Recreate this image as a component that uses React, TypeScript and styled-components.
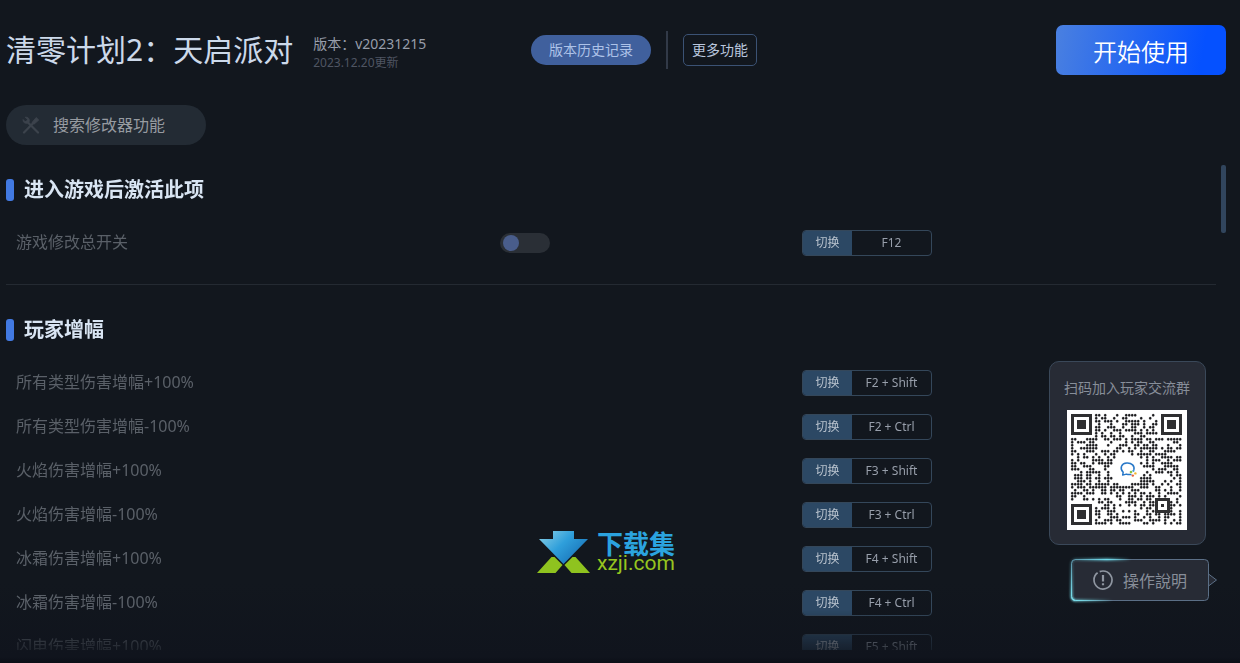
import React, { useId, useState } from "react";
import styled, { createGlobalStyle } from "styled-components";

const GlobalStyle = createGlobalStyle`
  *, *::before, *::after { box-sizing: border-box; }
  body {
    margin: 0;
    background: #12171e;
    color: #d3dcea;
    font-family: "Noto Sans", "Noto Sans CJK SC", sans-serif;
    font-weight: 400;
  }
  button, input { font: inherit; }
  h1, h2, p { margin: 0; }
`;

const Page = styled.div`
  position: relative;
  display: flex;
  flex-direction: column;
  height: 100vh;
  min-height: 600px;
  padding: 25px 14px 13px 6px;
  overflow: hidden;
  background: linear-gradient(to bottom, #12171e calc(100% - 80px), #10141d calc(100% - 6px), #0b0e16 100%);
`;

const Header = styled.header`
  display: flex;
  align-items: center;
  height: 50px;
`;

const TitleGroup = styled.div`
  display: flex;
  align-items: center;
  gap: 20px;
  flex: 0 1 525px;
  white-space: nowrap;
`;

const Title = styled.h1`
  font-size: 30px;
  line-height: 50px;
  font-weight: 400;
  color: #ccd9ea;
`;

const VersionInfo = styled.div`
  display: flex;
  flex-direction: column;
  padding-top: 6px;
`;

const VersionText = styled.p`
  font-size: 14px;
  line-height: 20px;
  color: #979daa;
`;

const UpdatedText = styled.p`
  font-size: 12px;
  line-height: 18px;
  color: #4f5562;
`;

const HistoryButton = styled.button`
  width: 120px;
  height: 30px;
  padding: 0 0 2px;
  border: 0;
  border-radius: 15px;
  background: #40609d;
  color: #adc2e8;
  font-size: 14px;
`;

const HeaderRule = styled.span`
  width: 2px;
  height: 38px;
  margin: 0 15px;
  background: #323a48;
`;

const MoreButton = styled.button`
  width: 74px;
  height: 32px;
  padding: 0 0 2px;
  border: 1px solid #3b5274;
  border-radius: 5px;
  background: transparent;
  color: #bac7de;
  font-size: 14px;
`;

const StartButton = styled.button`
  width: 170px;
  height: 50px;
  margin-left: auto;
  padding: 0;
  border: 0;
  border-radius: 7px;
  background: linear-gradient(100deg, #4a80e0 0%, #0551ff 85%);
  color: #fff;
  font-size: 24px;
  font-weight: 350;
`;

const SearchBox = styled.label`
  display: flex;
  align-items: center;
  flex: none;
  gap: 13px;
  width: 200px;
  height: 40px;
  margin: 30px 0 20px;
  padding: 0 16px;
  border-radius: 20px;
  background: #232b34;
`;

const SearchInput = styled.input`
  flex: 1;
  min-width: 0;
  padding: 0;
  border: 0;
  outline: 0;
  background: transparent;
  color: #9b9fa5;
  font-size: 16px;
  &::placeholder { color: #979ba1; opacity: 1; }
`;

const Body = styled.main`
  display: flex;
  flex: 1;
  min-height: 0;
  gap: 5px;
`;

const List = styled.div`
  flex: 1;
  min-width: 0;
  overflow-y: auto;
  scrollbar-width: none;
  mask-image: linear-gradient(to bottom, #000 calc(100% - 40px), rgba(0, 0, 0, 0.25) 100%);
`;

const ScrollThumb = styled.div`
  width: 5px;
  height: 68px;
  border-radius: 2px;
  background: #31455d;
`;

const Section = styled.section`
  & + & {
    margin-top: 19px;
    padding-top: 20px;
    border-top: 1px solid #242a32;
  }
`;

const SectionTitle = styled.h2`
  display: flex;
  align-items: center;
  gap: 10px;
  margin-bottom: 6px;
  font-size: 20px;
  line-height: 50px;
  font-weight: 700;
  color: #d9e5f3;
  &::before {
    content: "";
    width: 8px;
    height: 22px;
    border-radius: 3px;
    background: #427ae2;
  }
`;

const Row = styled.div`
  display: grid;
  grid-template-columns: 484fr 302fr 414fr;
  align-items: center;
  height: 44px;
  padding-left: 10px;
`;

const RowLabel = styled.label`
  font-size: 16px;
  line-height: 22px;
  padding-bottom: 2px;
  color: #5a6068;
`;

const Switch = styled.input`
  appearance: none;
  display: flex;
  align-items: center;
  width: 50px;
  height: 20px;
  margin: 0;
  padding: 0 3px;
  border-radius: 10px;
  background: #2a2f36;
  &::before {
    content: "";
    width: 16px;
    height: 16px;
    border-radius: 50%;
    background: #495d8b;
  }
  &:checked { justify-content: flex-end; }
`;

const HotkeyButton = styled.button`
  display: flex;
  grid-column: 3;
  width: 130px;
  height: 26px;
  padding: 0;
  overflow: hidden;
  border: 1px solid #34475a;
  border-radius: 4px;
  background: transparent;
  font-size: 12px;
  line-height: 24px;
`;

const HotkeyAction = styled.span`
  flex: 0 0 49px;
  background: #2c4864;
  color: #b9c3ce;
`;

const HotkeyText = styled.span`
  flex: 1;
  color: #989fab;
`;

const Aside = styled.aside`
  position: absolute;
  right: 23px;
  bottom: 62px;
  display: flex;
  flex-direction: column;
  align-items: flex-end;
  gap: 14px;
`;

const QrCard = styled.div`
  display: flex;
  flex-direction: column;
  align-items: center;
  gap: 12px;
  width: 157px;
  margin-right: 11px;
  padding: 15px 18px 14px 17px;
  border: 1px solid #3a4859;
  border-radius: 10px;
  background: #272b35;
  color: #878e99;
  font-size: 14px;
  line-height: 21px;
  white-space: nowrap;
`;

const HelpButton = styled.button`
  position: relative;
  display: flex;
  align-items: center;
  gap: 10px;
  width: 146px;
  height: 42px;
  padding: 0 0 0 22px;
  border: 0;
  background: transparent;
  color: #878e99;
  font-size: 16px;
`;

const HelpFrame = styled.svg`
  position: absolute;
  inset: -4px auto auto -4px;
  z-index: -1;
`;

const HelpLayer = styled.div`
  isolation: isolate;
`;

const Watermark = styled.div`
  position: absolute;
  left: calc(50% - 83px);
  bottom: 89px;
  display: flex;
  align-items: center;
  gap: 6px;
  pointer-events: none;
`;

const BrandText = styled.div`
  display: flex;
  flex-direction: column;
`;

const BrandName = styled.span`
  color: #2ba3df;
  font-size: 26px;
  line-height: 22px;
  font-weight: 700;
`;

const BrandDomain = styled.span`
  color: #96c51f;
  font-family: Roboto, "Liberation Sans", sans-serif;
  font-size: 21px;
  line-height: 16px;
  font-weight: 400;
`;

const QR_SIZE = 37;

// Finder and alignment squares: [column, row, size]
const QR_MARKS = [
  [0, 0, 7],
  [30, 0, 7],
  [0, 30, 7],
  [28, 28, 5],
];

function qrDots() {
  let seed = 20231215;
  let path = "";
  for (let y = 0; y < QR_SIZE; y++) {
    for (let x = 0; x < QR_SIZE; x++) {
      seed = (seed * 1103515245 + 12345) % 2147483648;
      const inMark = QR_MARKS.some(([mx, my, s]) => {
        const quiet = s === 7 ? 1 : 0;
        return x >= mx - quiet && x < mx + s + quiet && y >= my - quiet && y < my + s + quiet;
      });
      const inLogo = Math.hypot(x - 18, y - 18) < 5.2;
      if (!inMark && !inLogo && (seed >> 12) % 100 < 54) {
        path += `M${x * 3} ${y * 3 + 1.2}a1.2 1.2 0 1 1 2.4 0a1.2 1.2 0 1 1-2.4 0z`;
      }
    }
  }
  return path;
}

const QR_PATH = qrDots();

function QrCode() {
  return (
    <svg width="120" height="120" viewBox="0 0 120 120" role="img" aria-label="QR">
      <rect width="120" height="120" fill="#fff" />
      <g transform="translate(4 4)">
        <path d={QR_PATH} fill="#1c1c1e" stroke="#1c1c1e" strokeWidth=".2" />
        {QR_MARKS.map(([x, y, s]) => (
          <g key={`${x}-${y}`} transform={`translate(${x * 3} ${y * 3})`}>
            <rect width={s * 3} height={s * 3} fill="#2f2f31" />
            <rect x="3" y="3" width={s * 3 - 6} height={s * 3 - 6} fill="#fff" />
            <rect x="6" y="6" width={s * 3 - 12} height={s * 3 - 12} fill="#2f2f31" />
          </g>
        ))}
      </g>
      <path
        d="M64.5 64.4c-2 .4-3.700.2-5.200-.3l-3.600 1 .5-2.900c-3.900-4-1.800-8.900 3.600-9.300 5-.3 8.200 3.200 7 7"
        fill="none"
        stroke="#2878c8"
        strokeWidth="1.500"
        strokeLinejoin="round"
      />
      <circle cx="64" cy="62" r="1.300" fill="#8cc63f" />
      <circle cx="66.400" cy="60.800" r="1.100" fill="#3b97d8" />
      <circle cx="68.400" cy="63.400" r="1.200" fill="#f2b632" />
      <circle cx="65.800" cy="65.600" r="1.200" fill="#e8623a" />
    </svg>
  );
}

function ToolsIcon() {
  return (
    <svg width="18" height="18" viewBox="0 0 18 18" fill="none" stroke="#3c434c" aria-hidden="true">
      <path d="M5 5.500 16 16.500" strokeWidth="2.200" strokeLinecap="round" />
      <path d="M3.200 1.200 5.500 3.300 5 5.300 3 5.600 1.100 3.500C.7 6.400 3 7.900 5.600 7.200L7.300 5.400C7.700 2.700 6 .8 3.200 1.200Z" strokeWidth=".8" fill="#3c434c" />
      <path d="M2 16.500 11.300 7" strokeWidth="2.200" strokeLinecap="round" />
      <path d="M10 6.500 14.200 1.500 16.800 4 12 8.200Z" strokeWidth=".8" fill="#3c434c" />
    </svg>
  );
}

function AlertIcon() {
  return (
    <svg width="20" height="20" viewBox="0 0 20 20" fill="none" stroke="#8f96a1" aria-hidden="true">
      <path d="M4.600 2.800A9 9 0 1 0 10 1c-1.200 0-2.300.2-3.300.6" strokeWidth="1.700" />
      <path d="M10 5v6.500M10 13.300v2" strokeWidth="2.200" />
    </svg>
  );
}

function HelpBackground() {
  return (
    <HelpFrame width="154" height="50" viewBox="-4 -4 154 50" aria-hidden="true">
      <defs>
        <linearGradient id="topGlow" x1="0" x2="60" y1="0" y2="0" gradientUnits="userSpaceOnUse">
          <stop offset="0" stopColor="#5fb9cc" stopOpacity=".3" />
          <stop offset=".6" stopColor="#6fdcec" />
          <stop offset="1" stopColor="#6fdcec" stopOpacity="0" />
        </linearGradient>
        <linearGradient id="sideGlow" x1="0" x2="0" y1="0" y2="42" gradientUnits="userSpaceOnUse">
          <stop offset="0" stopColor="#5fb9cc" stopOpacity=".3" />
          <stop offset="1" stopColor="#7ce6f2" />
        </linearGradient>
        <linearGradient id="bottomGlow" x1="0" x2="42" y1="0" y2="0" gradientUnits="userSpaceOnUse">
          <stop offset="0" stopColor="#7ce6f2" />
          <stop offset="1" stopColor="#7ce6f2" stopOpacity="0" />
        </linearGradient>
        <filter id="soft" x="-4" y="-4" width="154" height="50" filterUnits="userSpaceOnUse">
          <feGaussianBlur stdDeviation="1.200" />
        </filter>
      </defs>
      <path
        d="M4.500.5h129a4 4 0 0 1 4 4v10.500l8 6-8 6v10.500a4 4 0 0 1-4 4h-129a4 4 0 0 1-4-4v-33a4 4 0 0 1 4-4Z"
        fill="#272b35"
        stroke="#5b6f86"
      />
      <path d="M137.500 15v12" stroke="#5b6f86" />
      {["url(#soft)", undefined].map((filter, i) => (
        <g key={i} fill="none" filter={filter} strokeWidth={filter ? 2 : 1}>
          <path d="M4 .5 60 .6" stroke="url(#topGlow)" />
          <path d="M4.500.5a4 4 0 0 0-4 4v33a4 4 0 0 0 3 3.800" stroke="url(#sideGlow)" />
          <path d="M2 40.500q1 1 2.500 1L42 41.600" stroke="url(#bottomGlow)" />
        </g>
      ))}
    </HelpFrame>
  );
}

function BrandMark() {
  return (
    <svg width="54" height="44" viewBox="0 0 54 44" aria-hidden="true">
      <defs>
        <linearGradient id="arrow" x1="0" y1="0" x2="1" y2=".7">
          <stop offset="0" stopColor="#8fd2e6" />
          <stop offset=".5" stopColor="#2f9fdb" />
          <stop offset="1" stopColor="#176fb5" />
        </linearGradient>
      </defs>
      <path d="M16 1h21v8h14L26.500 34 2 9h14Z" fill="url(#arrow)" />
      <path d="M14.500 27h3l8 8L18.500 43H0ZM38.500 27h-3l-8 8L34.500 43H53Z" fill="#8fc31f" />
    </svg>
  );
}

type Option = { name: string; hotkey: string; toggle?: boolean };

const SECTIONS: { title: string; options: Option[] }[] = [
  {
    title: "进入游戏后激活此项",
    options: [{ name: "游戏修改总开关", hotkey: "F12", toggle: true }],
  },
  {
    title: "玩家增幅",
    options: [
      { name: "所有类型伤害增幅+100%", hotkey: "F2 + Shift" },
      { name: "所有类型伤害增幅-100%", hotkey: "F2 + Ctrl" },
      { name: "火焰伤害增幅+100%", hotkey: "F3 + Shift" },
      { name: "火焰伤害增幅-100%", hotkey: "F3 + Ctrl" },
      { name: "冰霜伤害增幅+100%", hotkey: "F4 + Shift" },
      { name: "冰霜伤害增幅-100%", hotkey: "F4 + Ctrl" },
      { name: "闪电伤害增幅+100%", hotkey: "F5 + Shift" },
    ],
  },
];

function OptionRow({ name, hotkey, toggle }: Option) {
  const id = useId();
  const [on, setOn] = useState(false);
  return (
    <Row>
      <RowLabel htmlFor={id}>{name}</RowLabel>
      {toggle && (
        <Switch id={id} type="checkbox" role="switch" checked={on} onChange={(e) => setOn(e.target.checked)} />
      )}
      <HotkeyButton id={toggle ? undefined : id} type="button">
        <HotkeyAction>切换</HotkeyAction>
        <HotkeyText>{hotkey}</HotkeyText>
      </HotkeyButton>
    </Row>
  );
}

export default function App() {
  return (
    <>
      <GlobalStyle />
      <Page>
        <Header>
          <TitleGroup>
            <Title>清零计划2：天启派对</Title>
            <VersionInfo>
              <VersionText>版本：v20231215</VersionText>
              <UpdatedText>2023.12.20更新</UpdatedText>
            </VersionInfo>
          </TitleGroup>
          <HistoryButton type="button">版本历史记录</HistoryButton>
          <HeaderRule />
          <MoreButton type="button">更多功能</MoreButton>
          <StartButton type="button">开始使用</StartButton>
        </Header>

        <SearchBox>
          <ToolsIcon />
          <SearchInput type="text" placeholder="搜索修改器功能" aria-label="搜索修改器功能" />
        </SearchBox>

        <Body>
          <List>
            {SECTIONS.map((section) => (
              <Section key={section.title}>
                <SectionTitle>{section.title}</SectionTitle>
                {section.options.map((option) => (
                  <OptionRow key={option.name} {...option} />
                ))}
              </Section>
            ))}
          </List>
          <ScrollThumb />
        </Body>

        <Watermark>
          <BrandMark />
          <BrandText>
            <BrandName>下载集</BrandName>
            <BrandDomain>xzji.com</BrandDomain>
          </BrandText>
        </Watermark>

        <Aside>
          <QrCard>
            <p>扫码加入玩家交流群</p>
            <QrCode />
          </QrCard>
          <HelpLayer>
            <HelpButton type="button">
              <HelpBackground />
              <AlertIcon />
              操作說明
            </HelpButton>
          </HelpLayer>
        </Aside>
      </Page>
    </>
  );
}
